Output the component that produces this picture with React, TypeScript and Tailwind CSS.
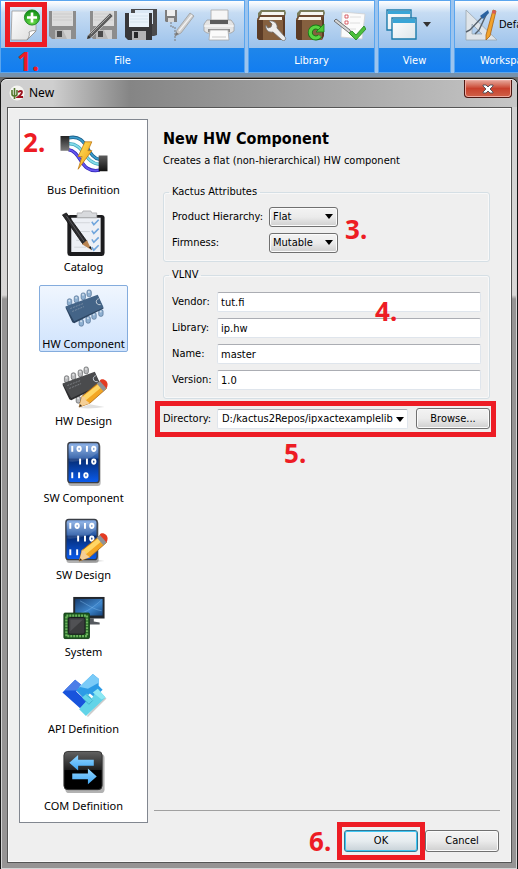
import React, { useState } from 'react';

type IconProps = { className?: string };

const svgProps = { viewBox: '0 0 32 32', 'aria-hidden': true } as const;

/* ---------- toolbar icons ---------- */

function NewIcon() {
  return (
    <svg {...svgProps} className="size-8">
      <defs>
        <linearGradient id="paper" x1="0" y1="0" x2="1" y2="1"><stop offset="0" stopColor="#fff" /><stop offset="1" stopColor="#dcdcdc" /></linearGradient>
        <radialGradient id="green" cx=".5" cy=".8" r=".8"><stop offset="0" stopColor="#6ee04a" /><stop offset="1" stopColor="#0c8a14" /></radialGradient>
      </defs>
      <path d="M4 2h24v20l-9 9H3z" fill="url(#paper)" stroke="#9a9a9a" strokeWidth=".8" />
      <path d="M28 22c-3-1-5 0-7 1 1 3 0 5-2 8z" fill="#fff" stroke="#888" strokeWidth=".8" />
      <circle cx="24" cy="8.500" r="7.6" fill="url(#green)" stroke="#0a7a10" strokeWidth=".8" />
      <path d="M24 3.500v10M19 8.500h10" stroke="#fff" strokeWidth="2.6" />
    </svg>
  );
}

function Disk({ body, label, x = 0 }: { body: string; label: string; x?: number }) {
  return (
    <g transform={`translate(${x} 0)`}>
      <path d="M2 2h27v28H5l-3-3z" fill={body} />
      <path d="M5 2h21v15H5z" fill={label} />
      <path d="M6 5h19M6 8h19M6 11h19" stroke="#c4c4c4" strokeWidth=".6" />
      <path d="M8 21h16v9H8z" fill="#b9b9b9" />
      <path d="M10 22h5v6h-5z" fill="#4a4a4a" />
      <path d="M16 21h8v9h-4z" fill="#dadada" opacity=".7" />
    </g>
  );
}

function SaveIcon() {
  return <svg {...svgProps} className="size-8"><Disk body="#8d8d8d" label="#dcdcdc" /></svg>;
}

function SaveAsIcon() {
  return (
    <svg {...svgProps} className="size-8">
      <Disk body="#8d8d8d" label="#dcdcdc" x={2} />
      <path d="M3 25L24 4l3 3L6 28l-5 2z" fill="#5d5d5d" stroke="#c8c8c8" strokeWidth=".8" />
      <path d="M5 25L24 6" stroke="#a5a5a5" />
      <path d="M1 30l1-4 3 3z" fill="#333" />
    </svg>
  );
}

function SaveAllIcon() {
  return (
    <svg {...svgProps} className="size-8">
      <path d="M6 0h26v26l-3 1H6z" fill="#4b4b4d" />
      <path d="M10 1h18v14H10z" fill="#dbe8f5" />
      <path d="M0 4h27v27H3l-3-3z" fill="#37373a" />
      <path d="M4 4h20v14H4z" fill="#e9f2fb" />
      <path d="M5 7h18M5 10h18M5 13h18" stroke="#cbd8e4" strokeWidth=".6" />
      <path d="M7 22h14v9H7z" fill="#b4b4b6" />
      <path d="M9 23h4v6H9z" fill="#28282a" />
    </svg>
  );
}

function SaveHierarchyIcon() {
  return (
    <svg {...svgProps} className="size-8">
      <path d="M1 1h12v12H2l-1-1z" fill="#7e7e7e" />
      <path d="M3 1h8v6H3z" fill="#efefef" />
      <path d="M4 9h6v4H4z" fill="#d8d8d8" />
      <path d="M7 13v5h4v14" fill="none" stroke="#7a7a7a" strokeDasharray="2 1" />
      <path d="M13 21L26 4l4 3-13 17-6 3z" fill="#cfcfcf" stroke="#9c9c9c" strokeWidth=".8" />
      <path d="M15 22L28 6" stroke="#f2f2f2" strokeWidth="1.2" />
      <path d="M11 27l1-4 3 2z" fill="#777" />
    </svg>
  );
}

function PrintIcon() {
  return (
    <svg {...svgProps} className="size-8">
      <path d="M8 1h17v12H8z" fill="#f6f6f6" stroke="#a8a8a8" strokeWidth=".8" />
      <path d="M4 11h24l3 4v7l-3 2H4l-3-2v-7z" fill="#e4e4e4" stroke="#a0a0a0" strokeWidth=".8" />
      <path d="M7 11h18v4H7z" fill="#5b5b5b" />
      <path d="M1 17h30" stroke="#fff" />
      <path d="M5 20h22v3H5z" fill="#8d8d8d" />
      <path d="M7 21h18l1 10H6z" fill="#fafafa" stroke="#a8a8a8" strokeWidth=".8" />
      <path d="M9 28h14" stroke="#c8c8c8" />
    </svg>
  );
}

function Book() {
  return (
    <g>
      <path d="M5 1h24l1 3-1 3H5L2 9V4z" fill="#7a7d5c" />
      <path d="M6 3h22v3H5z" fill="#f6f6f2" />
      <path d="M1 10l3-4h25v3l-2 5H1z" fill="#6c4a32" />
      <path d="M4 8h22v3H3z" fill="#f7f5ee" />
      <path d="M1 10h2v1h24v20H3l-2-2z" fill="#85603f" />
      <path d="M1 11h6v20H3l-2-2z" fill="#5c3c26" />
      <path d="M27 11l2-4v20l-2 4z" fill="#5c3c26" />
    </g>
  );
}

function LibraryConfigIcon() {
  return (
    <svg {...svgProps} className="size-8">
      <Book />
      <path d="M13 12l3 3-1 3-3 1-2-3c-1 4 2 8 7 7l9 8c2 2 5-1 3-3l-8-9c1-4-3-8-8-7z" fill="#ededed" stroke="#6d6d6d" strokeWidth=".8" />
    </svg>
  );
}

function LibraryRefreshIcon() {
  return (
    <svg {...svgProps} className="size-8">
      <Book />
      <path d="M25 20a5.500 5.500 0 1 0 0 7" fill="none" stroke="#167a16" strokeWidth="5" />
      <path d="M25 20a5.500 5.500 0 1 0 0 7" fill="none" stroke="#5ad442" strokeWidth="3.2" />
      <path d="M29 15v8h-8z" fill="#4ac636" stroke="#167a16" strokeWidth=".8" />
    </svg>
  );
}

function IntegrityIcon() {
  return (
    <svg {...svgProps} className="size-8">
      <path d="M8 3l23 2-3 25-21-2z" fill="#fbfbfb" stroke="#d0d0d0" strokeWidth=".8" />
      <path d="M11 6h3v3h-3zM11 12h3v3h-3z" fill="#fff" stroke="#d2404a" strokeWidth=".8" />
      <path d="M16 8h11M16 14h10M13 20h9" stroke="#dedede" />
      <path d="M0 12l14 11 5 5-3-7L2 10z" fill="#d4d4d4" stroke="#555" strokeWidth=".8" />
      <path d="M15 24l3-2 4 4 8-9 2 3-10 11z" fill="#4cbf3c" stroke="#208420" strokeWidth=".8" />
    </svg>
  );
}

function WindowsIcon() {
  return (
    <svg {...svgProps} className="size-8">
      <defs><linearGradient id="win" x1="0" y1="0" x2="1" y2="1"><stop offset="0" stopColor="#fff" /><stop offset="1" stopColor="#dfe6ea" /></linearGradient></defs>
      <path d="M2 1h24v20H2z" fill="url(#win)" stroke="#1c7bab" strokeWidth="1.4" />
      <path d="M3 2h22v3H3z" fill="#3aa5d6" />
      <path d="M7 9h24v21H7z" fill="url(#win)" stroke="#1c7bab" strokeWidth="1.4" />
      <path d="M8 10h22v4H8z" fill="#3aa5d6" />
    </svg>
  );
}

function WorkspaceIcon() {
  return (
    <svg {...svgProps} className="size-8">
      <path d="M1 1l31 30H1zM7 15v10h10z" fill="#dfe5ea" fillRule="evenodd" stroke="#9ba7b0" strokeWidth=".8" />
      <path d="M21 4L5 21l-4 2M22 4l-8 17-4 4" fill="none" stroke="#56616c" strokeWidth="1.4" />
      <path d="M15 7l8-6 1 3-6 6z" fill="#2a62a0" />
      <path d="M28 1l3 1-6 25-4 4v-5z" fill="#f3a32b" stroke="#a8641a" strokeWidth=".8" />
      <path d="M28 1l3 1-1 3-3-1z" fill="#d85a5a" />
    </svg>
  );
}

/* ---------- wizard list icons ---------- */

const large = { viewBox: '0 0 48 48', className: 'size-12', 'aria-hidden': true } as const;

function BusIcon() {
  return (
    <svg {...large}>
      <defs>
        <linearGradient id="plug" x1="0" y1="0" x2="0" y2="1"><stop offset="0" stopColor="#222" /><stop offset=".4" stopColor="#777" /><stop offset="1" stopColor="#111" /></linearGradient>
        <linearGradient id="bolt" x1="0" y1="0" x2="1" y2="1"><stop offset="0" stopColor="#ffe45c" /><stop offset="1" stopColor="#f29a12" /></linearGradient>
      </defs>
      <g fill="none" strokeWidth="3.4">
        <path d="M8 5c20-5 18 20 32 22" stroke="#1c5f8a" />
        <path d="M8 11c16-1 16 20 32 21" stroke="#45a9bf" />
        <path d="M8 17c14 2 12 25 32 21" stroke="#3328b8" />
      </g>
      <g fill="none" strokeWidth="1.8">
        <path d="M8 5c20-5 18 20 32 22" stroke="#3a9ccc" />
        <path d="M8 11c16-1 16 20 32 21" stroke="#84dcea" />
        <path d="M8 17c14 2 12 25 32 21" stroke="#6657f0" />
      </g>
      <path d="M0 3h9v15H0zM39 23h9v16h-9z" fill="url(#plug)" />
      <path d="M25 9h7l-4 9h4L18 37l4-13h-4z" fill="url(#bolt)" stroke="#bd7712" strokeWidth=".8" />
    </svg>
  );
}

function CatalogIcon() {
  return (
    <svg {...large}>
      <rect x="7" y="5" width="38" height="42" rx="3" fill="#1c1c1e" />
      <path d="M11 8h30v35H11z" fill="#edf0f5" />
      <path d="M17 3h5l1-2h8l1 2h5v5H17z" fill="#d8dadd" stroke="#a6a8ab" strokeWidth=".8" />
      <path d="M14 13h16M14 22h16M16 31h12M14 38h12" stroke="#d2d5da" />
      <path d="M32 12l2 3 5-5M32 21l2 3 5-5M32 30l2 3 5-5M32 38l2 3 5-5" fill="none" stroke="#6fa5dc" strokeWidth="1.6" />
      <path d="M2 5l4-2 21 29-4 3z" fill="#2b2b2d" stroke="#0e0e0e" strokeWidth=".8" />
      <path d="M6 6l18 26" stroke="#58585b" />
      <path d="M22 35l5-4 5 10z" fill="#b98552" />
      <path d="M29 38l3 3-1-4z" fill="#111" />
    </svg>
  );
}

function Chip({ dark, mid, pin }: { dark: string; mid: string; pin: string }) {
  const top = [[9, 15], [16, 12], [23, 9], [29, 6]];
  const bottom = [[21, 36], [28, 33], [34, 29], [41, 26]];
  return (
    <g>
      {[...top, ...bottom].map(([x, y]) => (
        <g key={x}>
          <rect x={x - 2} y={y - 3} width="4.500" height="7" rx="2" fill={pin} stroke={mid} strokeWidth=".6" />
          <circle cx={x} cy={y - 1} r="1" fill="#fff" opacity=".6" />
        </g>
      ))}
      <path d="M5 21l33-12 6 13-30 15-2-1z" fill={dark} />
      <path d="M5 20l33-12 6 13-30 14z" fill={mid} />
      <path d="M10 22l13-5M12 25l12-5" stroke="#b6bcc4" strokeWidth=".9" strokeDasharray="2 1" opacity=".5" />
      <path d="M39 12c-4 1-3 7 2 6" fill="none" stroke="#c9d2da" />
    </g>
  );
}

function Pencil() {
  return (
    <g>
      <path d="M19 45q14 1 26-1L30 41z" fill="#000" opacity=".12" />
      <path d="M19 44l3-11L40 18l7 7-17 15z" fill="#f3a623" stroke="#a96818" strokeWidth=".8" />
      <path d="M23 33l18-14 3 3-18 15z" fill="#ffd665" />
      <path d="M19 44l3-11 3 1 1 3 4 3z" fill="#f5cf96" />
      <path d="M19 44l1-3 2 2z" fill="#3a2a1a" />
      <path d="M37 20l4-3 6 7-3 4z" fill="#8e9298" />
      <path d="M40 17c3-4 11 1 7 8z" fill="#e33b22" />
    </g>
  );
}

function HwComponentIcon() {
  return <svg {...large}><Chip dark="#2c4562" mid="#446487" pin="#8fb0d1" /></svg>;
}

function HwDesignIcon() {
  return <svg {...large}><g transform="translate(-3 0)"><Chip dark="#2c2c2e" mid="#4a4b4d" pin="#b9babc" /></g><Pencil /></svg>;
}

function CodeTile({ id }: { id: string }) {
  const ones = [[12, 8], [27, 8], [20, 21], [27, 21], [12, 35], [19, 35]];
  const zeros = [[19, 8], [34, 8], [34, 21], [26, 35]];
  return (
    <g>
      <defs><linearGradient id={id} x1="0" y1="0" x2="0" y2="1"><stop offset="0" stopColor="#8fb4ea" /><stop offset=".38" stopColor="#2456a4" /><stop offset=".42" stopColor="#052c74" /><stop offset="1" stopColor="#0a5cf0" /></linearGradient></defs>
      <rect x="8" y="3" width="33" height="43" rx="3" fill="#000" opacity=".3" />
      <rect x="7.5" y="1.5" width="32" height="41" rx="3" fill={`url(#${id})`} stroke="#3a3e46" strokeWidth="1.4" />
      <path d="M9 21q18 1 29-9V4H9z" fill="#fff" opacity=".14" />
      <g stroke="#fff" strokeWidth="2" fill="none">
        {ones.map(([x, y]) => <path key={`${x}-${y}`} d={`M${x} ${y - 3}v6`} />)}
        {zeros.map(([x, y]) => <ellipse key={`${x}-${y}`} cx={x} cy={y} rx="1.7" ry="2.2" />)}
      </g>
    </g>
  );
}

function SwComponentIcon() {
  return <svg {...large}><CodeTile id="tile-a" /></svg>;
}

function SwDesignIcon() {
  return <svg {...large}><g transform="translate(-2 0)"><CodeTile id="tile-b" /></g><Pencil /></svg>;
}

function SystemIcon() {
  return (
    <svg {...large}>
      <defs><linearGradient id="screen" x1="0" y1="0" x2="1" y2="1"><stop offset="0" stopColor="#173d70" /><stop offset=".6" stopColor="#3e86cc" /><stop offset="1" stopColor="#16457e" /></linearGradient></defs>
      <path d="M27 24h7v3l6 1v2H24z" fill="#55595f" />
      <path d="M13 2h32v22H13z" fill="#22262c" />
      <path d="M15 4h28v17H15z" fill="url(#screen)" />
      <path d="M17 20C28 17 34 12 42 5M20 6c8 4 14 9 22 10" fill="none" stroke="#78b4e8" opacity=".5" />
      <rect x="3.500" y="18.500" width="26" height="26" rx="1" fill="#1e5a22" stroke="#153f17" />
      <rect x="6" y="21" width="21" height="21" fill="none" stroke="#6cb45c" strokeWidth="2.4" strokeDasharray="2 1" />
      <rect x="8" y="23" width="17" height="17" rx="2" fill="#3b3c3e" stroke="#1b1c1e" />
      <path d="M10 25h13l-13 12z" fill="#505154" />
    </svg>
  );
}

function ApiIcon() {
  return (
    <svg {...large}>
      <path d="M4 22l24 24 19-19-3-2-17 20z" fill="#000" opacity=".2" />
      <path d="M15 8l6 5-5 7 11 10-7 7L2 21z" fill="#1854dc" />
      <path d="M15 8l6 5-4 6H4z" fill="#4c7ee8" />
      <path d="M33 2l6 5v7l4 4-8 8-5-4-6 5-8-8z" fill="#2c9be6" />
      <path d="M33 2l6 5v4L28 17l-9-2z" fill="#7acbf8" />
      <path d="M38 17l8 9-20 19-7-7 7-8-4-4 5-4 5 5z" fill="#62d4e8" />
      <path d="M38 17l8 9-4 2-9-7z" fill="#8de8f3" />
      <path d="M24 28l5 5 4-4M26 23l6 5" fill="none" stroke="#38a8c8" strokeWidth=".8" />
    </svg>
  );
}

function ComIcon() {
  return (
    <svg {...large}>
      <defs>
        <linearGradient id="com" x1="0" y1="0" x2="0" y2="1"><stop offset="0" stopColor="#626262" /><stop offset=".48" stopColor="#1f1f1f" /><stop offset=".5" stopColor="#000" /></linearGradient>
        <linearGradient id="arrow" x1="0" y1="0" x2="0" y2="1"><stop offset="0" stopColor="#93d6ff" /><stop offset="1" stopColor="#3fa6f4" /></linearGradient>
      </defs>
      <rect x="5" y="5" width="40" height="40" rx="4" fill="#000" opacity=".3" />
      <rect x="3.5" y="2.5" width="39" height="39" rx="4" fill="url(#com)" stroke="#333" />
      <path d="M9 14l9-8v5h16v6H18v5z" fill="url(#arrow)" />
      <path d="M37 28l-9-8v5H12v6h16v5z" fill="url(#arrow)" />
    </svg>
  );
}

function AppIcon() {
  return (
    <svg viewBox="0 0 16 16" className="size-4" aria-hidden="true">
      <circle cx="8" cy="8" r="7.5" fill="#f4f4f0" />
      <path d="M5.500 14V3M3 5v4q0 2 2 2M8 5v4q0 2-2 2" fill="none" stroke="#54782c" strokeWidth="1.6" />
      <path d="M9 7q4-2 4 0 0 2-4 5h5" fill="none" stroke="#9c1420" strokeWidth="1.8" />
    </svg>
  );
}

function Arrow({ className = '' }: IconProps) {
  return <svg viewBox="0 0 8 5" className={`h-[5px] w-2 ${className}`} aria-hidden="true"><path d="M0 0h8L4 5z" fill="currentColor" /></svg>;
}

/* ---------- shared pieces ---------- */

function Step({ n, className }: { n: number; className: string }) {
  return <span className={`pointer-events-none absolute z-10 font-['Noto_Sans',sans-serif] text-[26px] leading-8 font-bold text-[#ed1c24] ${className}`}>{n}.</span>;
}

function Highlight({ className }: { className: string }) {
  return <span className={`pointer-events-none absolute z-10 border-5 border-[#ed1c24] ${className}`} />;
}

function ToolGroup({ title, className = '', children }: { title: string; className?: string; children: React.ReactNode }) {
  return (
    <section className={`flex shrink-0 flex-col border border-[#5aa5ee] ${className}`}>
      <div className="flex h-[47px] items-center bg-linear-to-b from-white via-[#c6dcf3] via-25% to-[#9cc2eb] pl-[7px]">{children}</div>
      <h2 className="flex h-6 items-center justify-center bg-linear-to-b from-[#1f86ea] to-[#127df0] pt-px text-white">{title}</h2>
    </section>
  );
}

function Tool({ label, children, className = '' }: { label: string; children: React.ReactNode; className?: string }) {
  return <button type="button" aria-label={label} className={`relative mr-[7px] shrink-0 ${className}`}>{children}</button>;
}

const kinds = [
  { name: 'Bus Definition', Icon: BusIcon },
  { name: 'Catalog', Icon: CatalogIcon },
  { name: 'HW Component', Icon: HwComponentIcon },
  { name: 'HW Design', Icon: HwDesignIcon },
  { name: 'SW Component', Icon: SwComponentIcon },
  { name: 'SW Design', Icon: SwDesignIcon },
  { name: 'System', Icon: SystemIcon },
  { name: 'API Definition', Icon: ApiIcon },
  { name: 'COM Definition', Icon: ComIcon },
];

const buttonLook = 'rounded-[3px] border border-[#707070] bg-linear-to-b from-[#f3f3f3] via-[#ebebeb] via-50% to-[#cfcfcf] shadow-[inset_0_0_0_1px_#fbfbfb]';
const fieldLook = 'h-5 rounded-[2px] border border-[#dfe5ec] border-t-[#abadb3] bg-white';

function SmallSelect({ id, label, options }: { id: string; label: string; options: string[] }) {
  return (
    <div className="flex h-5 items-center">
      <label htmlFor={id} className="w-[97px] shrink-0">{label}</label>
      <div className="relative">
        <select id={id} className={`h-5 w-[69px] appearance-none pl-[3px] ${buttonLook}`}>
          {options.map((o) => <option key={o}>{o}</option>)}
        </select>
        <Arrow className="pointer-events-none absolute top-[7px] right-[5px]" />
      </div>
    </div>
  );
}

function Field({ id, label, value }: { id: string; label: string; value: string }) {
  return (
    <div className="flex items-center">
      <label htmlFor={id} className="w-[45px] shrink-0">{label}</label>
      <input id={id} defaultValue={value} className={`min-w-0 flex-1 px-[3px] ${fieldLook}`} />
    </div>
  );
}

const groupLook = 'rounded-[3px] border border-[#d5dfe5] px-2 shadow-[inset_0_0_0_1px_#f8f8f8]';

export default function App() {
  const [kind, setKind] = useState('HW Component');

  return (
    <div className="min-h-screen overflow-hidden bg-[#6b6b6b] font-['DejaVu_Sans_Condensed','DejaVu_Sans',sans-serif] text-[11px] leading-[14px] text-black">
      <header className="relative h-[77px] overflow-hidden border-b-4 border-[#7591ad] bg-[#9cc4ee]">
        <div className="flex gap-[3px]">
          <ToolGroup title="File" className="w-[245px]">
            <Tool label="New">
              <NewIcon />
              <Highlight className="-top-[7px] -left-[3px] h-[45px] w-[42px]" />
              <Step n={1} className="top-9 left-[9px]" />
            </Tool>
            <Tool label="Save"><SaveIcon /></Tool>
            <Tool label="Save as"><SaveAsIcon /></Tool>
            <Tool label="Save all"><SaveAllIcon /></Tool>
            <Tool label="Save hierarchy"><SaveHierarchyIcon /></Tool>
            <Tool label="Print"><PrintIcon /></Tool>
          </ToolGroup>
          <ToolGroup title="Library" className="w-[127px]">
            <Tool label="Library locations"><LibraryConfigIcon /></Tool>
            <Tool label="Refresh library"><LibraryRefreshIcon /></Tool>
            <Tool label="Check integrity"><IntegrityIcon /></Tool>
          </ToolGroup>
          <ToolGroup title="View" className="w-[73px]">
            <Tool label="Windows" className="-ml-px flex items-center gap-[6px]"><WindowsIcon /><Arrow className="text-[#333]" /></Tool>
          </ToolGroup>
          <ToolGroup title="Workspace" className="w-[106px]">
            <Tool label="Workspace" className="ml-[3px] flex items-center gap-[2px]"><WorkspaceIcon /><span>Default</span></Tool>
          </ToolGroup>
        </div>
      </header>

      <div role="dialog" aria-labelledby="dialog-title" className="mt-px rounded-t-[7px] border-x border-t border-[#161616] bg-linear-to-b from-[#d0d0d0] from-0% via-[#d9d7d6] via-[216px] to-[#969494] to-[220px] pr-[5px] pb-[6px] pl-[6px] shadow-[inset_0_0_0_1px_#d4d4d4]">
        <div className="-mr-[5px] -ml-[6px] flex h-7 items-start rounded-t-[6px] border-t border-[#eeeeee] bg-linear-to-r from-[#cfcfcf] from-10% via-[#858585] via-25% to-[#c6c6c6]">
          <h1 id="dialog-title" className="flex h-[26px] flex-1 items-center gap-1 pl-2 font-['Noto_Sans',sans-serif] text-xs"><AppIcon />New</h1>
          <button type="button" aria-label="Close" className="mr-[5px] flex h-[18px] w-12 items-center justify-center rounded-b-[4px] border border-t-0 border-[#4b1712] bg-linear-to-b from-[#e5a89c] via-[#c8402c] via-50% to-[#cf6048] shadow-[inset_0_0_0_1px_#eeaaa0]">
            <svg viewBox="0 0 12 10" className="h-[10px] w-3" aria-hidden="true"><path d="M1 1h3l2 2 2-2h3v1L8 5l3 3v1H8L6 7 4 9H1V8l3-3-3-3z" fill="#fff" stroke="#4c4c55" strokeWidth=".9" /></svg>
          </button>
        </div>

        <div className="flex min-h-[756px] flex-col border border-[#555] bg-[#efefef] px-[11px] pt-[11px] shadow-[inset_0_0_0_1px_#fafafa]">
          <div className="flex gap-[6px]">
            <nav className="relative flex w-[129px] shrink-0 flex-col items-center gap-[10px] border border-[#828790] bg-white pt-[11px] pb-2 font-['Noto_Sans',sans-serif] leading-[14px]">
              <Step n={2} className="top-[6px] left-[3px]" />
              {kinds.map(({ name, Icon }) => (
                <button
                  key={name}
                  type="button"
                  aria-pressed={kind === name}
                  onClick={() => setKind(name)}
                  className={`flex h-[67px] w-[89px] flex-col items-center rounded-[2px] border pt-px whitespace-nowrap ${kind === name ? 'border-[#84acdd] bg-linear-to-b from-[#f0f6fe] to-[#cfe3fd]' : 'border-transparent'}`}
                >
                  <Icon />
                  <span className="mt-[3px]">{name}</span>
                </button>
              ))}
            </nav>

            <main className="mb-3 flex min-w-0 flex-1 flex-col border-b border-[#a0a0a0] pt-[9px] pr-[10px] pl-[9px]">
              <h2 className="text-base leading-[22px] font-bold">New HW Component</h2>
              <p className="mt-1 whitespace-nowrap">Creates a flat (non-hierarchical) HW component</p>

              <fieldset className={`relative mt-[17px] pb-2 ${groupLook}`}>
                <legend className="-ml-[3px] px-[3px]">Kactus Attributes</legend>
                <div className="mt-2 flex flex-col gap-[6px]">
                  <SmallSelect id="hierarchy" label="Product Hierarchy:" options={['Flat', 'Product', 'Board', 'Chip', 'SoC', 'IP']} />
                  <SmallSelect id="firmness" label="Firmness:" options={['Mutable', 'Template', 'Fixed']} />
                </div>
                <Step n={3} className="top-[14px] left-[181px]" />
              </fieldset>

              <fieldset className={`relative mt-[6px] pb-2 ${groupLook}`}>
                <legend className="-ml-[3px] px-[3px]">VLNV</legend>
                <div className="mt-[10px] flex flex-col gap-[6px]">
                  <Field id="vendor" label="Vendor:" value="tut.fi" />
                  <Field id="library" label="Library:" value="ip.hw" />
                  <Field id="name" label="Name:" value="master" />
                  <Field id="version" label="Version:" value="1.0" />
                </div>
                <Step n={4} className="top-[13px] left-[211px]" />
              </fieldset>

              <div className="relative mt-[9px] flex items-center">
                <label htmlFor="directory" className="w-[54px] shrink-0">Directory:</label>
                <div className="relative min-w-0 flex-1">
                  <select id="directory" className={`w-full appearance-none pl-1 ${fieldLook}`}>
                    <option>D:/kactus2Repos/ipxactexamplelib</option>
                  </select>
                  <Arrow className="pointer-events-none absolute top-2 right-1" />
                </div>
                <button type="button" className={`ml-2 h-[21px] w-[74px] ${buttonLook}`}>Browse...</button>
                <Highlight className="-top-[7px] -right-[6px] -bottom-2 -left-2" />
                <Step n={5} className="top-[29px] left-[121px]" />
              </div>
            </main>
          </div>

          <footer className="mt-[7px] flex justify-end gap-[7px] pr-px pb-[10px]">
            <div className="relative">
              <button type="button" className="h-[22px] w-[74px] rounded-[3px] border border-[#2e7896] bg-linear-to-b from-[#f0f4f6] via-[#e6ecef] via-50% to-[#c8d2d8] shadow-[inset_0_0_0_1px_#3fc6f3]">OK</button>
              <Highlight className="-inset-x-[7px] -inset-y-2" />
              <Step n={6} className="-top-[5px] -left-[35px]" />
            </div>
            <button type="button" className={`h-[22px] w-[74px] ${buttonLook}`}>Cancel</button>
          </footer>
        </div>
      </div>
    </div>
  );
}
